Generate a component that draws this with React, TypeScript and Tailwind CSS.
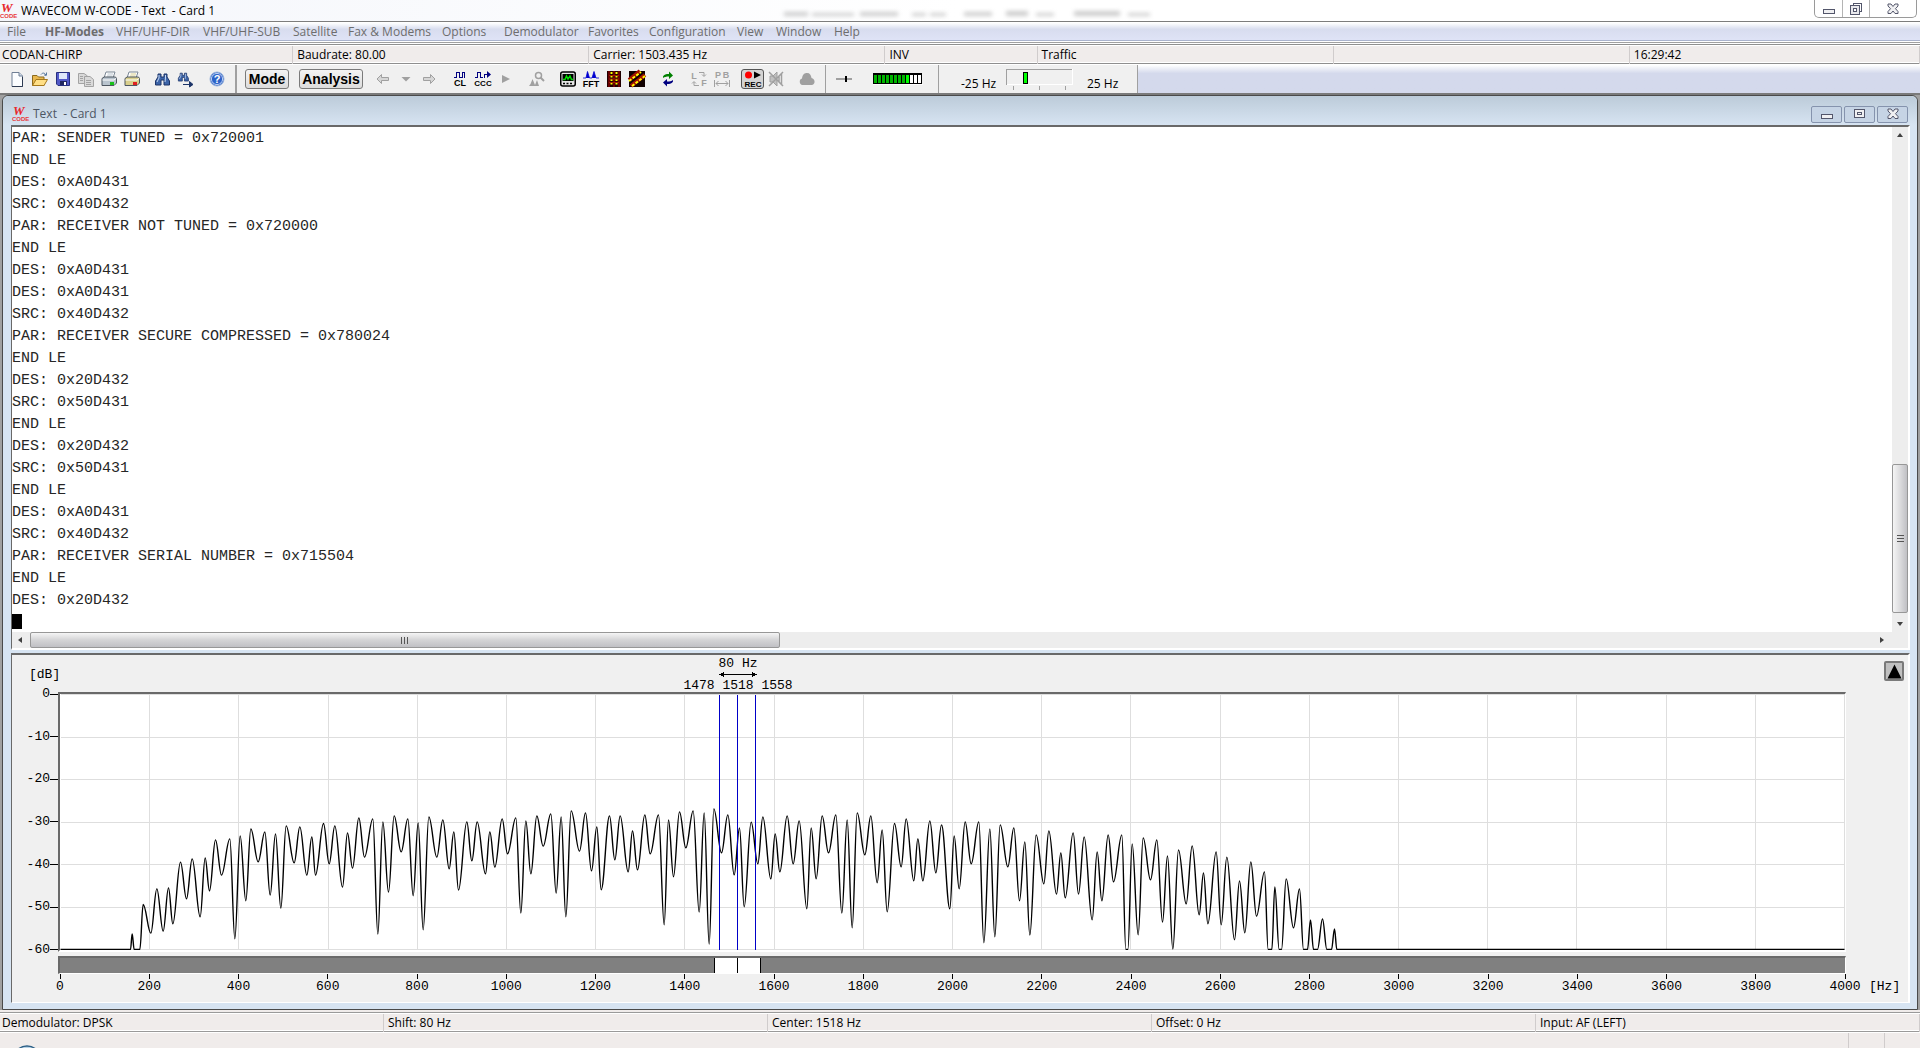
import { useState, type ReactNode } from "react";
import { clsx } from "clsx";

/**
 * App.tsx
 * W-CODE decoder window: menus, toolbar, decoded text and FFT spectrum.
 */

const MENU = [
  { label: "File", width: "w-[38px]" },
  { label: "HF-Modes", width: "w-[71px]", bold: true },
  { label: "VHF/UHF-DIR", width: "w-[87px]" },
  { label: "VHF/UHF-SUB", width: "w-[90px]" },
  { label: "Satellite", width: "w-[55px]" },
  { label: "Fax & Modems", width: "w-[94px]" },
  { label: "Options", width: "w-[62px]" },
  { label: "Demodulator", width: "w-[84px]" },
  { label: "Favorites", width: "w-[61px]" },
  { label: "Configuration", width: "w-[88px]" },
  { label: "View", width: "w-[39px]" },
  { label: "Window", width: "w-[58px]" },
  { label: "Help", width: "w-[42px]" },
];

const INFO = ["CODAN-CHIRP", "Baudrate: 80.00", "Carrier: 1503.435 Hz", "INV", "Traffic", "", "16:29:42"];

const STATUS = ["Demodulator: DPSK", "Shift: 80 Hz", "Center: 1518 Hz", "Offset: 0 Hz", "Input: AF (LEFT)"];

const LINES = [
  "PAR: SENDER TUNED = 0x720001",
  "END LE",
  "DES: 0xA0D431",
  "SRC: 0x40D432",
  "PAR: RECEIVER NOT TUNED = 0x720000",
  "END LE",
  "DES: 0xA0D431",
  "DES: 0xA0D431",
  "SRC: 0x40D432",
  "PAR: RECEIVER SECURE COMPRESSED = 0x780024",
  "END LE",
  "DES: 0x20D432",
  "SRC: 0x50D431",
  "END LE",
  "DES: 0x20D432",
  "SRC: 0x50D431",
  "END LE",
  "DES: 0xA0D431",
  "SRC: 0x40D432",
  "PAR: RECEIVER SERIAL NUMBER = 0x715504",
  "END LE",
  "DES: 0x20D432",
];

const SPECTRUM_W = 5352;
const SPECTRUM_H = 765;

// turning points of the spectrum; x runs 0..4000 Hz, y runs 0..-60 dB
const SPECTRUM: [number, number][] = [
  [0, 765], [210, 765], [215, 718], [221, 765], [238, 765], [248, 630], [271, 716], [289, 583], [308, 710], [324, 580],
  [337, 688], [360, 503], [378, 613], [395, 493], [419, 667], [434, 490], [447, 589], [465, 436], [483, 542], [508, 433],
  [523, 733], [539, 424], [556, 619], [571, 403], [593, 502], [613, 412], [629, 602], [645, 418], [661, 641], [677, 394],
  [701, 505], [718, 397], [739, 542], [754, 427], [765, 542], [789, 387], [806, 508], [823, 394], [846, 578], [861, 415],
  [876, 521], [895, 370], [912, 488], [937, 373], [952, 719], [967, 382], [984, 593], [1001, 364], [1022, 472], [1042, 373],
  [1058, 604], [1073, 385], [1088, 706], [1105, 367], [1129, 488], [1147, 376], [1166, 523], [1180, 412], [1194, 587], [1219, 382],
  [1234, 499], [1250, 382], [1275, 538], [1288, 412], [1303, 518], [1325, 373], [1341, 478], [1366, 370], [1381, 656], [1396, 379],
  [1411, 538], [1429, 364], [1448, 455], [1471, 358], [1487, 596], [1502, 367], [1516, 667], [1532, 349], [1557, 470], [1575, 355],
  [1593, 529], [1609, 397], [1622, 586], [1647, 364], [1663, 496], [1679, 364], [1703, 532], [1716, 409], [1731, 526], [1753, 361],
  [1769, 478], [1794, 361], [1811, 691], [1824, 376], [1839, 547], [1857, 352], [1876, 460], [1898, 349], [1916, 653], [1931, 355],
  [1946, 749], [1960, 343], [1983, 475], [2002, 361], [2021, 541], [2037, 400], [2051, 637], [2072, 383], [2092, 508], [2107, 367],
  [2131, 553], [2144, 418], [2158, 532], [2180, 364], [2198, 508], [2216, 379], [2239, 643], [2252, 400], [2267, 553], [2285, 364],
  [2304, 475], [2326, 361], [2344, 656], [2360, 376], [2375, 700], [2390, 355], [2413, 481], [2431, 364], [2450, 565], [2465, 406],
  [2480, 652], [2502, 387], [2522, 517], [2537, 373], [2560, 559], [2572, 433], [2587, 559], [2608, 379], [2626, 535], [2643, 391],
  [2668, 643], [2681, 424], [2696, 583], [2714, 382], [2732, 508], [2755, 382], [2770, 745], [2788, 403], [2803, 727], [2819, 391],
  [2842, 517], [2860, 400], [2877, 619], [2893, 442], [2908, 722], [2927, 421], [2950, 568], [2965, 409], [2988, 599], [3001, 475],
  [3014, 610], [3038, 415], [3054, 599], [3071, 427], [3095, 676], [3110, 472], [3124, 619], [3143, 421], [3159, 562], [3184, 421],
  [3196, 765], [3202, 765], [3215, 448], [3233, 721], [3248, 430], [3270, 556], [3289, 436], [3306, 683], [3321, 484], [3337, 764],
  [3354, 466], [3377, 628], [3395, 454], [3416, 661], [3429, 535], [3442, 688], [3467, 472], [3482, 691], [3499, 488], [3522, 736],
  [3537, 559], [3553, 715], [3571, 502], [3588, 665], [3612, 532], [3623, 765], [3634, 765], [3643, 577], [3656, 765], [3663, 765],
  [3677, 553], [3699, 700], [3717, 583], [3729, 765], [3741, 765], [3750, 676], [3759, 765], [3771, 765], [3786, 673], [3799, 765],
  [3813, 765], [3822, 703], [3829, 765], [5352, 765],
];

function spectrumPath() {
  return SPECTRUM.map(([x, y], i) => {
    if (i === 0) return `M${x} ${y}`;
    const [px, py] = SPECTRUM[i - 1];
    const bend = (x - px) * 0.38;
    return `C${px + bend} ${py} ${x - bend} ${y} ${x} ${y}`;
  }).join("");
}

const HZ = Array.from({ length: 21 }, (_, i) => i * 200);
const DB = [0, -10, -20, -30, -40, -50, -60];
const MARKERS = [1478, 1518, 1558];

const CARD_BUTTON = "flex h-[17px] w-[31px] items-center justify-center rounded-[2px] border border-[#8593ad] bg-[#c6d4e5]";

export default function App() {
  return (
    <div className="flex min-h-screen flex-col overflow-hidden bg-[#f0eceb] font-['Open_Sans','Noto_Sans',sans-serif] text-xs text-black">
      <TitleBar />
      <MenuBar />
      <div className="h-[3px] border-y border-white bg-[#a0a0a0]" />
      <div className="border-y border-[#8f8f8f] bg-white py-px">
        <div className="grid h-4 grid-cols-[293fr_296fr_296fr_152fr_296fr_296fr_290fr] bg-[#f0eceb]">
          {INFO.map((text, i) => (
            <div key={i} className="border-r border-[#d0cccc] pl-1 leading-[18px] whitespace-nowrap first:pl-[2px]">
              {text}
            </div>
          ))}
        </div>
      </div>
      <Toolbar />
      <main className="flex flex-1 flex-col border-t-2 border-[#7a7a7a] bg-[#a0a0a0] px-[2px]">
        <CardWindow />
      </main>
      <footer>
        <div className="mt-[2px] border-y border-[#9a9a9a] bg-white py-px">
          <div className="grid h-4 grid-cols-5 bg-[#f0eceb]">
            {STATUS.map((text) => (
              <div key={text} className="border-r border-[#d0cccc] pl-1 leading-[18px] whitespace-nowrap first:pl-[2px]">
                {text}
              </div>
            ))}
          </div>
        </div>
        <div className="flex h-4 border-t border-white pl-4">
          <svg className="h-4 w-[22px]" viewBox="0 0 22 16">
            <circle cx="11" cy="27" r="14" fill="#b9d3e6" stroke="#2c5f86" strokeWidth="1.4" />
          </svg>
          <div className="flex-1" />
          <div className="w-9 border-l border-[#d0cccc]" />
          <div className="w-9 border-l border-[#d0cccc]" />
        </div>
      </footer>
    </div>
  );
}

function CodeLogo() {
  return (
    <svg className="h-4 w-4 shrink-0 overflow-visible" viewBox="0 0 16 16">
      <text x="1" y="9" fontSize="13" fontWeight="bold" fontStyle="italic" fontFamily="Liberation Serif" fill="#e8262b">
        W
      </text>
      <text x="0" y="15" fontSize="6" fontWeight="bold" fontFamily="Liberation Sans" fill="#e8363b">
        CODE
      </text>
    </svg>
  );
}

function TitleBar() {
  return (
    <header className="flex h-[22px] items-start border-b border-[#7d7d7d] bg-linear-to-r from-[#f4f6fb] via-white to-white">
      <div className="flex flex-1 items-center pt-[3px]">
        <CodeLogo />
        <h1 className="ml-[5px] text-xs leading-4 whitespace-pre">WAVECOM W-CODE - Text  - Card 1</h1>
      </div>
      {/* window titles behind the glass */}
      <svg className="mr-[660px] h-[21px] w-[380px]" viewBox="0 0 380 21">
        <g fill="#9b9b9b" opacity="0.5" style={{ filter: "blur(2px)" }}>
          <rect x="10" y="12" width="24" height="4" />
          <rect x="38" y="13" width="42" height="3" />
          <rect x="86" y="12" width="38" height="4" />
          <rect x="138" y="13" width="14" height="3" />
          <rect x="156" y="13" width="16" height="3" />
          <rect x="190" y="12" width="28" height="4" />
          <rect x="232" y="11" width="22" height="5" />
          <rect x="262" y="13" width="18" height="3" />
          <rect x="300" y="11" width="46" height="5" />
          <rect x="354" y="13" width="22" height="3" />
        </g>
      </svg>
      <div className="mr-[3px] flex h-[18px] rounded-b-[5px] border border-t-0 border-[#9a9a9a] bg-white">
        <button aria-label="Minimize" className="flex w-[28px] items-center justify-center border-r border-[#b4b4b4]">
          <MinimizeGlyph />
        </button>
        <button aria-label="Restore" className="flex w-[27px] items-center justify-center border-r border-[#b4b4b4]">
          <svg className="h-3 w-3" viewBox="0 0 12 12" fill="none" stroke="#53566b" shapeRendering="crispEdges">
            <path d="M3.500 2.500V0.500H11.500V8.500H9.500" />
            <rect x="0.500" y="2.500" width="9" height="9" fill="#e8e8ec" />
            <rect x="3.500" y="5.500" width="3" height="3" fill="#fff" />
          </svg>
        </button>
        <button aria-label="Close" className="flex w-[46px] items-center justify-center">
          <CloseGlyph />
        </button>
      </div>
    </header>
  );
}

function MinimizeGlyph() {
  return (
    <svg className="h-3 w-3" viewBox="0 0 12 12" shapeRendering="crispEdges">
      <rect x="0.500" y="6.500" width="11" height="4" fill="#f0f0f2" stroke="#53566b" />
    </svg>
  );
}

function CloseGlyph() {
  return (
    <svg className="h-3 w-3" viewBox="0 0 12 12">
      <path
        d="M1 1H4L6 3.500L8 1H11V3L8.500 5.700L11 8.500V10.500H8L6 8L4 10.500H1V8.500L3.500 5.700L1 3Z"
        fill="#f0f0f2"
        stroke="#53566b"
      />
    </svg>
  );
}

function MenuBar() {
  return (
    <nav className="flex h-[19px] border-b border-[#a9b2cc] bg-linear-to-b from-white from-5% via-[#d8ddef] via-40% to-[#dfe3f6]">
      {MENU.map(({ label, width, bold }) => (
        <button
          key={label}
          className={clsx("shrink-0 pt-[2px] pl-[7px] text-left leading-4 whitespace-nowrap text-[#6d6d6d]", width, bold && "font-bold")}
        >
          {label}
        </button>
      ))}
    </nav>
  );
}

function ToolButton({ label, children }: { label: string; children: ReactNode }) {
  return (
    <button aria-label={label} className="flex h-[23px] w-[23px] items-center justify-center">
      <svg className="h-4 w-4 overflow-visible" viewBox="0 0 16 16">
        {children}
      </svg>
    </button>
  );
}

function PixelLabel({ x, y, color = "#000", children }: { x: number; y: number; color?: string; children: string }) {
  return (
    <text x={x} y={y} fontSize="9" fontWeight="bold" fontFamily="Liberation Sans" textAnchor="middle" fill={color}>
      {children}
    </text>
  );
}

function Printer({ body, light }: { body: string; light: string }) {
  return (
    <>
      <path d="M5 1H14L12 7H3Z" fill="#fff" stroke="#7b8794" />
      <path d="M6.500 3H12M6 5H11.500" stroke={body} />
      <path d="M1 7.500L3 6H14.500L15.500 7.500V12L13 14.500H1Z" fill={body} stroke="#4d5660" />
      <path d="M1.500 9H13L15 7.500" stroke="#fff" fill="none" />
      <rect x="9" y="11" width="4" height="3" fill={light} />
    </>
  );
}

function Binoculars() {
  return (
    <>
      <path d="M3 3H6V6H9V3H12V6L14.500 10V14H9V9H6V14H0.500V10L3 6Z" fill="#3c64a8" stroke="#1c3468" />
      <path d="M4 4V7L2 11M10.500 4V7L10 11" stroke="#c4d8f4" fill="none" />
    </>
  );
}

function Toolbar() {
  return (
    <div className="flex h-[29px] border-t border-white bg-linear-to-b from-white via-[#d4d9ec] via-30% to-[#d4d9ec]">
      <div className="flex bg-[#f0f0f0]">
        <div className="flex gap-2 border-r-2 border-[#a0a0a0] pt-[2px] pr-[7px] pl-[5px]">
          <div className="flex">
            <ToolButton label="New">
              <path d="M3 1.500H10L13.500 5V15.500H3Z" fill="#fbfdff" stroke="#6f7f95" />
              <path d="M10 1.500V5H13.500" fill="#cfdbea" stroke="#6f7f95" />
              <path d="M3 15.500H13.500V6" stroke="#2e3b52" fill="none" />
            </ToolButton>
            <ToolButton label="Open">
              <path d="M0.500 14.500V4.500H5L6.500 6H12V14.500Z" fill="#e9b84e" stroke="#8a6a1e" />
              <path d="M0.500 14.500L4 8.500H15.500L12 14.500Z" fill="#ffdf86" stroke="#a5781b" />
              <path d="M9 3.500C11 1 13.500 2 14 5M12 4H14.500V1.500" fill="none" stroke="#56779f" />
            </ToolButton>
            <ToolButton label="Save">
              <path d="M1.500 1.500H14.500V14.500H3L1.500 13Z" fill="#5259c8" stroke="#27307f" />
              <rect x="4" y="2" width="8" height="6" fill="#dfe8fa" />
              <rect x="5" y="10" width="7" height="4" fill="#20275f" />
              <rect x="9" y="11" width="2" height="3" fill="#fff" />
            </ToolButton>
            <ToolButton label="Copy">
              <g fill="#d9d9d9" stroke="#a3a3a3">
                <path d="M0.500 2.500H6L9.500 5V12.500H0.500Z" />
                <path d="M6.500 5.500H12L15.500 8.500V15.500H6.500Z" />
                <path d="M2 5.500H5M2 7.500H5M2 9.500H5M8 9.500H13M8 11.500H13M8 13.500H13" />
              </g>
            </ToolButton>
            <ToolButton label="Print">
              <Printer body="#b9c4ce" light="#18c018" />
            </ToolButton>
            <ToolButton label="Print setup">
              <Printer body="#d9cf8c" light="#e02020" />
            </ToolButton>
          </div>
          <div className="flex">
            <ToolButton label="Find">
              <Binoculars />
            </ToolButton>
            <ToolButton label="Find next">
              <g transform="scale(0.72)">
                <Binoculars />
              </g>
              <path d="M5 13.500H14M11.500 10.500L15 13.500L11.500 16Z" fill="#1c3468" stroke="#1c3468" />
            </ToolButton>
          </div>
          <ToolButton label="Help">
            <circle cx="8" cy="8" r="7" fill="#2c63c8" stroke="#9db6dc" />
            <circle cx="8" cy="8" r="5.600" fill="none" stroke="#dfe9fb" strokeWidth="0.800" />
            <text x="8" y="12" fontSize="11" fontWeight="bold" fontFamily="Liberation Sans" textAnchor="middle" fill="#fff">
              ?
            </text>
          </ToolButton>
        </div>
        <div className="flex gap-[10px] pt-1 pr-2 pl-2 font-['Liberation_Sans',sans-serif] text-sm leading-4 font-bold">
          <button className="h-5 w-11 rounded-[3px] border border-[#7a7a7a] bg-linear-to-b from-[#f4f4f4] to-[#dcdcdc]">Mode</button>
          <button className="h-5 w-16 rounded-[3px] border border-[#7a7a7a] bg-linear-to-b from-[#f4f4f4] to-[#dcdcdc]">
            Analysis
          </button>
        </div>
        <div className="flex gap-2 border-r border-[#a0a0a0] pt-[2px] pr-[7px]">
          <div className="flex">
            <ToolButton label="Back">
              <path d="M2 8L6.500 3.500V6.500H13.500V9.500H6.500V12.500Z" fill="#d6d6d6" stroke="#a0a0a0" />
            </ToolButton>
            <ToolButton label="History">
              <path d="M3.500 6H12.500L8 10.500Z" fill="#a0a0a0" />
            </ToolButton>
            <ToolButton label="Forward">
              <path d="M14 8L9.500 3.500V6.500H2.500V9.500H9.500V12.500Z" fill="#d6d6d6" stroke="#a0a0a0" />
            </ToolButton>
          </div>
          <div className="flex">
            <ToolButton label="Clock">
              <path d="M2 6.500H4.500V1.500H7.500V6.500H10.500V1.500H12.500V6.500" fill="none" stroke="#000080" shapeRendering="crispEdges" />
              <PixelLabel x={8} y={15}>CL</PixelLabel>
            </ToolButton>
            <ToolButton label="Clock sequence">
              <path d="M0 6.500H2.500V1.500H5.500V6.500H8M9 6.500V3.500H14" fill="none" stroke="#000080" shapeRendering="crispEdges" />
              <path d="M12 0L16 3.500L12 7Z" fill="#000080" />
              <text x="8" y="15" fontSize="8" fontWeight="bold" fontFamily="Liberation Sans" textAnchor="middle">
                CCC
              </text>
            </ToolButton>
            <ToolButton label="Run">
              <path d="M4 4V12L12 8Z" fill="#a0a0a0" />
            </ToolButton>
          </div>
          <ToolButton label="Zoom">
            <circle cx="9.500" cy="4.500" r="3" fill="none" stroke="#a0a0a0" strokeWidth="1.500" />
            <path d="M11.500 6.500L15 10" stroke="#a0a0a0" strokeWidth="2" />
            <path d="M0 15L1.500 13L3.500 8L6 14L8 9L10 15Z" fill="#a0a0a0" />
          </ToolButton>
          <div className="flex">
            <ToolButton label="Scope">
              <rect x="0.750" y="1" width="14.500" height="14" rx="2" fill="#e4e4e4" stroke="#000" strokeWidth="1.500" />
              <rect x="2.500" y="3" width="11" height="7" fill="#000" />
              <path d="M3 8.500H5L6.500 5L8 8L10 5L11.500 8.500H13" fill="none" stroke="#0d0" strokeWidth="1.500" />
              <path d="M3 12.500H13" stroke="#000" strokeWidth="1.500" strokeDasharray="2 1.500" />
            </ToolButton>
            <ToolButton label="FFT">
              <path d="M0 7H3L4.500 0.500L6.500 7H9L11 0.500L13 7H16" fill="#0000d0" stroke="#0000d0" strokeWidth="0.800" />
              <PixelLabel x={8} y={15.5}>FFT</PixelLabel>
            </ToolButton>
            <ToolButton label="Raster">
              <rect x="1" y="0" width="14" height="16" fill="#200000" />
              <path d="M3 0V16M8 0V16M13 0V16" stroke="#800000" strokeWidth="1.500" />
              <path d="M5.500 1V15M10.500 1V15" stroke="#ff0" strokeWidth="2" strokeDasharray="2 1.500" />
              <path d="M3 4.500H13M3 8H13M3 11.500H13" stroke="#a02000" />
            </ToolButton>
            <ToolButton label="Waterfall">
              <rect x="0" y="0" width="16" height="16" fill="#100000" />
              <path d="M0 9L11 0M2 15L16 4" stroke="#a01000" strokeWidth="4" />
              <path d="M0 10L12 1M3 15L16 5" stroke="#ff0" strokeWidth="2" strokeDasharray="3 1.500" />
            </ToolButton>
          </div>
          <ToolButton label="Refresh">
            <path d="M3 7V5.500C4 3.500 6 3 9 3V0.500L13 4.500L9 8V5.500C6 5.500 4.500 6 3 7Z" fill="#008000" />
            <path d="M13 9V10.500C12 12.500 10 13 7 13V15.500L3 11.500L7 8V10.500C10 10.500 11.500 10 13 9Z" fill="#000080" />
          </ToolButton>
          <div className="flex">
            <ToolButton label="Low frequency">
              <PixelLabel x={3} y={8} color="#a0a0a0">L</PixelLabel>
              <PixelLabel x={13} y={15} color="#a0a0a0">F</PixelLabel>
              <path d="M8 1.500H13V5M11 3.500L13 5.500L15 3.500M8 14.500H3V11M1 12.500L3 10.500L5 12.500" fill="none" stroke="#a0a0a0" />
            </ToolButton>
            <ToolButton label="Passband">
              <PixelLabel x={4} y={7} color="#a0a0a0">P</PixelLabel>
              <PixelLabel x={12} y={7} color="#a0a0a0">B</PixelLabel>
              <path d="M0.500 9V16M15.500 9V16M2 12.500H14M4.500 10L2 12.500L4.500 15M11.500 10L14 12.500L11.500 15" fill="none" stroke="#a0a0a0" />
            </ToolButton>
          </div>
          <div className="flex">
            <button
              aria-label="Record"
              className="mt-[2px] flex h-5 w-[23px] items-center justify-center rounded-[3px] border border-[#555] bg-[#d4d4d4]"
            >
              <svg className="h-4 w-4 overflow-visible" viewBox="0 0 16 16">
                <circle cx="3.500" cy="4" r="3.500" fill="#f00" />
                <path d="M9 0.500V7.500L16 4Z" fill="#000" />
                <text x="8" y="15.500" fontSize="8" fontWeight="bold" fontFamily="Liberation Sans" textAnchor="middle">
                  REC
                </text>
              </svg>
            </button>
            <ToolButton label="Mute">
              <path d="M2 5H5L9 1V15L5 11H2Z" fill="#c0c0c0" stroke="#a0a0a0" />
              <path d="M1 1L15 15M15 1L1 15M11 5V11M13.500 3V13" stroke="#a0a0a0" strokeWidth="1.500" />
            </ToolButton>
          </div>
          <ToolButton label="Cloud">
            <path d="M3 14C0 13 0 8 3 7.500C3.500 3 6 2 8 2C11 2 12 4 12.500 7C16 7.500 17 13 13 14Z" fill="#a0a0a0" />
          </ToolButton>
        </div>
        <div className="flex w-[113px] items-center gap-[21px] border-r border-[#a0a0a0] pl-[10px]">
          <svg className="h-3 w-4" viewBox="0 0 16 12" shapeRendering="crispEdges">
            <path d="M0 6H16" stroke="#a0a0a0" strokeWidth="2" />
            <path d="M10 3V9" stroke="#000" strokeWidth="2" />
          </svg>
          <svg className="h-3 w-[50px]" viewBox="0 0 50 12" shapeRendering="crispEdges">
            <rect x="0" y="0" width="49" height="11" fill="#000" />
            {Array.from({ length: 12 }, (_, i) => (
              <rect key={i} x={1 + i * 4} y="2" width="3" height="8" fill={i < 8 ? "#00b400" : i === 8 ? "#0f0" : "#fff"} />
            ))}
            <path d="M0 11.500H50" stroke="#fff" />
          </svg>
        </div>
        <div className="flex w-[199px] gap-[14px] border-r border-[#a0a0a0] pl-[22px]">
          <span className="w-[31px] pt-[11px] leading-4 whitespace-nowrap">-25 Hz</span>
          <svg className="mt-1 h-[21px] w-[67px]" viewBox="0 0 67 21" shapeRendering="crispEdges">
            <path d="M0.500 16V0.500H66" fill="none" stroke="#a0a0a0" />
            <path d="M1 15.500H66.500V0" fill="none" stroke="#fff" />
            <rect x="17.500" y="3.500" width="4" height="11" fill="#0f0" stroke="#000" />
            <path d="M7.500 17V21M33.500 17V21M59.500 17V21" stroke="#a0a0a0" />
          </svg>
          <span className="pt-[11px] leading-4 whitespace-nowrap">25 Hz</span>
        </div>
      </div>
    </div>
  );
}

function CardWindow() {
  return (
    <section className="flex flex-1 flex-col rounded-t-md border border-[#4a4a4a] bg-[#d7e4f2]">
      <div className="flex h-[29px] shrink-0 items-center rounded-t-md bg-linear-to-b from-[#bccbd9] to-[#d7e4f2] pt-[7px] pr-[9px] pl-[9px]">
        <CodeLogo />
        <h2 className="ml-[5px] flex-1 text-xs whitespace-pre text-[#4d5663]">Text  - Card 1</h2>
        <div className="flex gap-[2px]">
          <button aria-label="Minimize card" className={CARD_BUTTON}>
            <MinimizeGlyph />
          </button>
          <button aria-label="Maximize card" className={CARD_BUTTON}>
            <svg className="h-3 w-3" viewBox="0 0 12 12" fill="#f0f0f2" stroke="#53566b" shapeRendering="crispEdges">
              <rect x="0.500" y="1.500" width="10" height="8" />
              <rect x="3.500" y="4.500" width="4" height="2" />
            </svg>
          </button>
          <button aria-label="Close card" className={CARD_BUTTON}>
            <CloseGlyph />
          </button>
        </div>
      </div>
      <div className="flex flex-1 flex-col pr-[7px] pb-[6px] pl-2">
        <TextPane />
        <SpectrumPane />
      </div>
    </section>
  );
}

function ScrollArrow({ points }: { points: string }) {
  return (
    <svg className="h-[16px] w-[16px] shrink-0" viewBox="0 0 16 16">
      <polygon points={points} fill="#404040" />
    </svg>
  );
}

function TextPane() {
  return (
    <div className="flex flex-1 flex-col border-t-2 border-r-2 border-b-2 border-l border-t-[#696969] border-r-white border-b-white border-l-[#696969] bg-[#f0f0f0]">
      <div className="flex flex-1">
        <div className="flex-1 bg-white pt-px font-['Liberation_Mono',monospace] text-[15px] leading-[22px] whitespace-pre text-neutral-800">
          {LINES.map((line, i) => (
            <div key={i}>{line}</div>
          ))}
          <div className="pt-[2px]">
            <div className="h-[15px] w-[10px] bg-black" />
          </div>
        </div>
        <div className="flex w-[16px] flex-col bg-[#ededed]">
          <ScrollArrow points="5,10 11,10 8,6" />
          <div className="flex-[322]" />
          <div className="flex flex-[147] items-center justify-center rounded-[2px] border border-[#979797] bg-linear-to-r from-[#f5f5f5] via-[#dcdcde] to-[#c0c0c4]">
            <svg className="h-2 w-[7px]" viewBox="0 0 7 8" shapeRendering="crispEdges">
              <path d="M0 0.500H7M0 3.500H7M0 6.500H7" stroke="#555" />
            </svg>
          </div>
          <div className="flex-[3]" />
          <ScrollArrow points="5,6 11,6 8,10" />
        </div>
      </div>
      <div className="flex h-[16px] bg-[#ededed] pr-[18px]">
        <ScrollArrow points="10,5 10,11 6,8" />
        <div className="w-[2px]" />
        <div className="flex flex-[749] items-center justify-center rounded-[2px] border border-[#979797] bg-linear-to-b from-[#f5f5f5] via-[#d4d4d6] to-[#c0c0c4]">
          <svg className="h-[7px] w-2" viewBox="0 0 8 7" shapeRendering="crispEdges">
            <path d="M0.500 0V7M3.500 0V7M6.500 0V7" stroke="#555" />
          </svg>
        </div>
        <div className="flex-[1096]" />
        <ScrollArrow points="6,5 6,11 10,8" />
      </div>
    </div>
  );
}

function SpectrumPane() {
  const [expanded, setExpanded] = useState(false);

  return (
    <div className="mt-[3px] border-t-2 border-r-2 border-b border-l border-t-[#696969] border-r-white border-b-white border-l-[#696969] bg-[#f0f0f0] font-['Liberation_Mono',monospace] text-[13px] leading-4">
      <div className="flex h-[37px]">
        <div className="w-[49px] shrink-0 pt-[12px] pl-[17px]">[dB]</div>
        <div className="flex-1">
          <div className="ml-[37.95%] flex w-0 flex-col items-center whitespace-pre">
            <div className="pt-px">80 Hz</div>
            <svg className="h-[5px] w-[38px] shrink-0" viewBox="0 0 38 5" shapeRendering="crispEdges">
              <path d="M2 2.500H36" stroke="#000" />
              <path d="M0 2.500L5 0V5ZM38 2.500L33 0V5Z" fill="#000" />
            </svg>
            <div className="pt-px">1478 1518 1558</div>
          </div>
        </div>
        <div className="flex w-[63px] shrink-0 justify-end pt-[6px] pr-[4px]">
          <button
            aria-label="Expand spectrum"
            aria-pressed={expanded}
            onClick={() => setExpanded(!expanded)}
            className="flex h-5 w-5 items-center justify-center rounded-[2px] border-2 border-[#7a7a7a] bg-[#c0c0c0]"
          >
            <svg className="h-[15px] w-[15px]" viewBox="0 0 15 15">
              <path d="M7.500 0.500L14.500 14.500H0.500Z" fill="#000" />
            </svg>
          </button>
        </div>
      </div>

      <div className="flex">
        <div className="flex h-[258px] w-[46px] shrink-0 flex-col justify-between pt-[2px]">
          {DB.map((db) => (
            <div key={db} className="flex h-0 items-center justify-end">
              {db}
              <span className="h-px w-2 bg-black" />
            </div>
          ))}
        </div>
        <div className="min-w-0 flex-1">
          <div className="border-t-2 border-r border-b-2 border-l-2 border-t-[#696969] border-r-white border-b-white border-l-[#696969] bg-white">
            <svg className="block h-[256px] w-full" viewBox={`0 0 ${SPECTRUM_W + 3} ${SPECTRUM_H + 3}`} preserveAspectRatio="none">
              <g transform="translate(1.5 1.5)">
                <g stroke="#dedede" shapeRendering="crispEdges">
                  {HZ.slice(1).map((hz) => (
                    <line key={hz} x1={(hz / 4000) * SPECTRUM_W} x2={(hz / 4000) * SPECTRUM_W} y1="0" y2={SPECTRUM_H} vectorEffect="non-scaling-stroke" />
                  ))}
                  {DB.map((db) => (
                    <line key={db} x1="0" x2={SPECTRUM_W} y1={(-db / 60) * SPECTRUM_H} y2={(-db / 60) * SPECTRUM_H} vectorEffect="non-scaling-stroke" />
                  ))}
                </g>
                <path d={spectrumPath()} fill="none" stroke="#000" strokeWidth="1.4" vectorEffect="non-scaling-stroke" />
                {MARKERS.map((hz) => (
                  <line
                    key={hz}
                    x1={(hz / 4000) * SPECTRUM_W}
                    x2={(hz / 4000) * SPECTRUM_W}
                    y1="0"
                    y2={SPECTRUM_H}
                    stroke="#0000c8"
                    shapeRendering="crispEdges"
                    vectorEffect="non-scaling-stroke"
                  />
                ))}
              </g>
            </svg>
          </div>
          {/* filter passband */}
          <div className="mt-[4px] flex h-[18px] border-t-2 border-r border-b border-l-2 border-t-[#696969] border-r-white border-b-white border-l-[#696969] bg-[#808080]">
            <div className="flex-[1467]" />
            <div className="flex-[50] border-x border-black bg-white" />
            <div className="flex-[50] border-r border-black bg-white" />
            <div className="flex-[2431]" />
          </div>
          <div className="flex justify-between pr-px pl-[2px]">
            {HZ.map((hz) => (
              <div key={hz} className="flex w-0 flex-col items-center">
                <span className="h-[5px] w-px bg-black" />
                {hz}
              </div>
            ))}
          </div>
        </div>
        <div className="flex w-[62px] shrink-0 flex-col justify-end pl-[23px]">[Hz]</div>
      </div>
      <div className="h-[7px]" />
    </div>
  );
}
